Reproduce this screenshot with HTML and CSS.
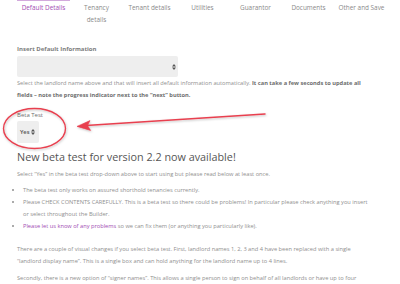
FILE: index.html
```html
<!DOCTYPE html>
<html>
<head>
<meta charset="utf-8">
<link rel="stylesheet" href="styles.css">
</head>
<body>
<div class="page">
  <nav class="tabs">
    <div class="tab active">Default Details</div>
    <div class="tab">Tenancy<br>details</div>
    <div class="tab">Tenant details</div>
    <div class="tab">Utilities</div>
    <div class="tab">Guarantor</div>
    <div class="tab">Documents</div>
    <div class="tab">Other and Save</div>
  </nav>
  <main class="content">
    <div class="field-label">Insert Default Information</div>
    <div class="select select-wide">
      <svg class="updown" width="4" height="6" viewBox="0 0 4 6"><path d="M2 0 L4 2.4 H0 Z M2 6 L4 3.6 H0 Z" fill="#555"/></svg>
    </div>
    <p class="help">Select the landlord name above and that will insert all default information automatically. <b>It can take a few seconds to update all fields &ndash; note the progress indicator next to the &ldquo;next&rdquo; button.</b></p>
    <div class="field-label beta-label">Beta Test</div>
    <div class="select select-small">
      <span class="sel-text">Yes</span>
      <svg class="updown" width="4" height="6" viewBox="0 0 4 6"><path d="M2 0 L4 2.4 H0 Z M2 6 L4 3.6 H0 Z" fill="#555"/></svg>
    </div>
    <h2 class="heading">New beta test for version 2.2 now available!</h2>
    <p class="text intro">Select &ldquo;Yes&rdquo; in the beta test drop-down above to start using but please read below at least once.</p>
    <ul class="bullets">
      <li>The beta test only works on assured shorthold tenancies currently.</li>
      <li>Please CHECK CONTENTS CAREFULLY. This is a beta test so there could be problems! In particular please check anything you insert or select throughout the Builder.</li>
      <li><a class="link" href="#">Please let us know of any problems</a> so we can fix them (or anything you particularly like).</li>
    </ul>
    <p class="text para1">There are a couple of visual changes if you select beta test. First, landlord names 1, 2, 3 and 4 have been replaced with a single &ldquo;landlord display name&rdquo;. This is a single box and can hold anything for the landlord name up to 4 lines.</p>
    <p class="text para2">Secondly, there is a new option of &ldquo;signer names&rdquo;. This allows a single person to sign on behalf of all landlords or have up to four signers.</p>
  </main>
  <svg class="annotation" width="400" height="284" viewBox="0 0 400 284">
    <defs>
      <filter id="sh" x="-20%" y="-50%" width="140%" height="200%">
        <feDropShadow dx="0.6" dy="1" stdDeviation="0.8" flood-color="#000" flood-opacity="0.25"/>
      </filter>
    </defs>
    <g filter="url(#sh)" stroke="#e8404f" fill="none">
      <ellipse cx="34.5" cy="128.5" rx="31" ry="20" stroke-width="1.4"/>
      <line x1="265" y1="114" x2="86" y2="125.5" stroke-width="1.5" stroke-linecap="round"/>
      <path d="M77 126.4 L90 120.6 L87.5 125.6 L90.6 130.4 Z" fill="#e8404f" stroke-width="0.6" stroke-linejoin="round"/>
    </g>
  </svg>
</div>
</body>
</html>
```
FILE: styles.css
```css
html, body {
  margin: 0;
  padding: 0;
  background: #fff;
}
.page {
  position: relative;
  width: 400px;
  height: 284px;
  overflow: hidden;
  font-family: "Open Sans", "Liberation Sans", sans-serif;
  color: #8a8a8a;
}
.tabs {
  display: flex;
  padding-left: 17px;
}
.tab {
  width: 53px;
  flex: none;
  box-sizing: border-box;
  padding: 2px 0 0;
  text-align: center;
  white-space: nowrap;
  font-size: 6.4px;
  line-height: 12px;
  color: #8a8a8a;
}
.tab.active {
  color: #a24db3;
  border-top: 1px solid #d2a9dc;
  padding-top: 1px;
}
.content {
  padding: 18px 25px 0 17px;
}
.field-label {
  font-size: 6px;
  line-height: 10px;
  font-weight: 700;
  color: #7d7d7d;
}
.select {
  display: flex;
  align-items: center;
  justify-content: flex-end;
  background: #eeeeee;
  border-radius: 2px;
  box-sizing: border-box;
}
.select-wide {
  width: 161px;
  height: 21px;
  margin-top: 2px;
  padding-right: 2px;
}
.select-small {
  width: 22px;
  height: 22px;
  margin-top: 1px;
  padding-right: 4px;
  justify-content: flex-end;
  gap: 1.5px;
}
.sel-text {
  font-size: 5.8px;
  color: #555;
  font-weight: 600;
}
.updown {
  display: block;
}
.help {
  margin: 0;
  font-size: 5.7px;
  line-height: 12px;
  color: #8f8f8f;
}
.help b {
  color: #6e6e6e;
  font-weight: 700;
}
.beta-label {
  margin-top: 9px;
  font-weight: 400;
  color: #6e6e6e;
}
.heading {
  margin: 7px 0 0;
  font-size: 10.8px;
  line-height: 14px;
  font-weight: 400;
  color: #555;
}
.text {
  margin: 0;
  font-size: 5.7px;
  line-height: 12px;
  color: #8f8f8f;
}
.intro {
  margin-top: 4px;
}
.bullets {
  margin: 4px 6px 0 0;
  padding: 0 0 0 6px;
  font-size: 5.7px;
  line-height: 12px;
  color: #8f8f8f;
}
.link {
  color: #a24db3;
  text-decoration: none;
}
.para1 {
  margin-top: 11px;
}
.para2 {
  margin-top: 5px;
}
.annotation {
  position: absolute;
  left: 0;
  top: 0;
  pointer-events: none;
}
```
